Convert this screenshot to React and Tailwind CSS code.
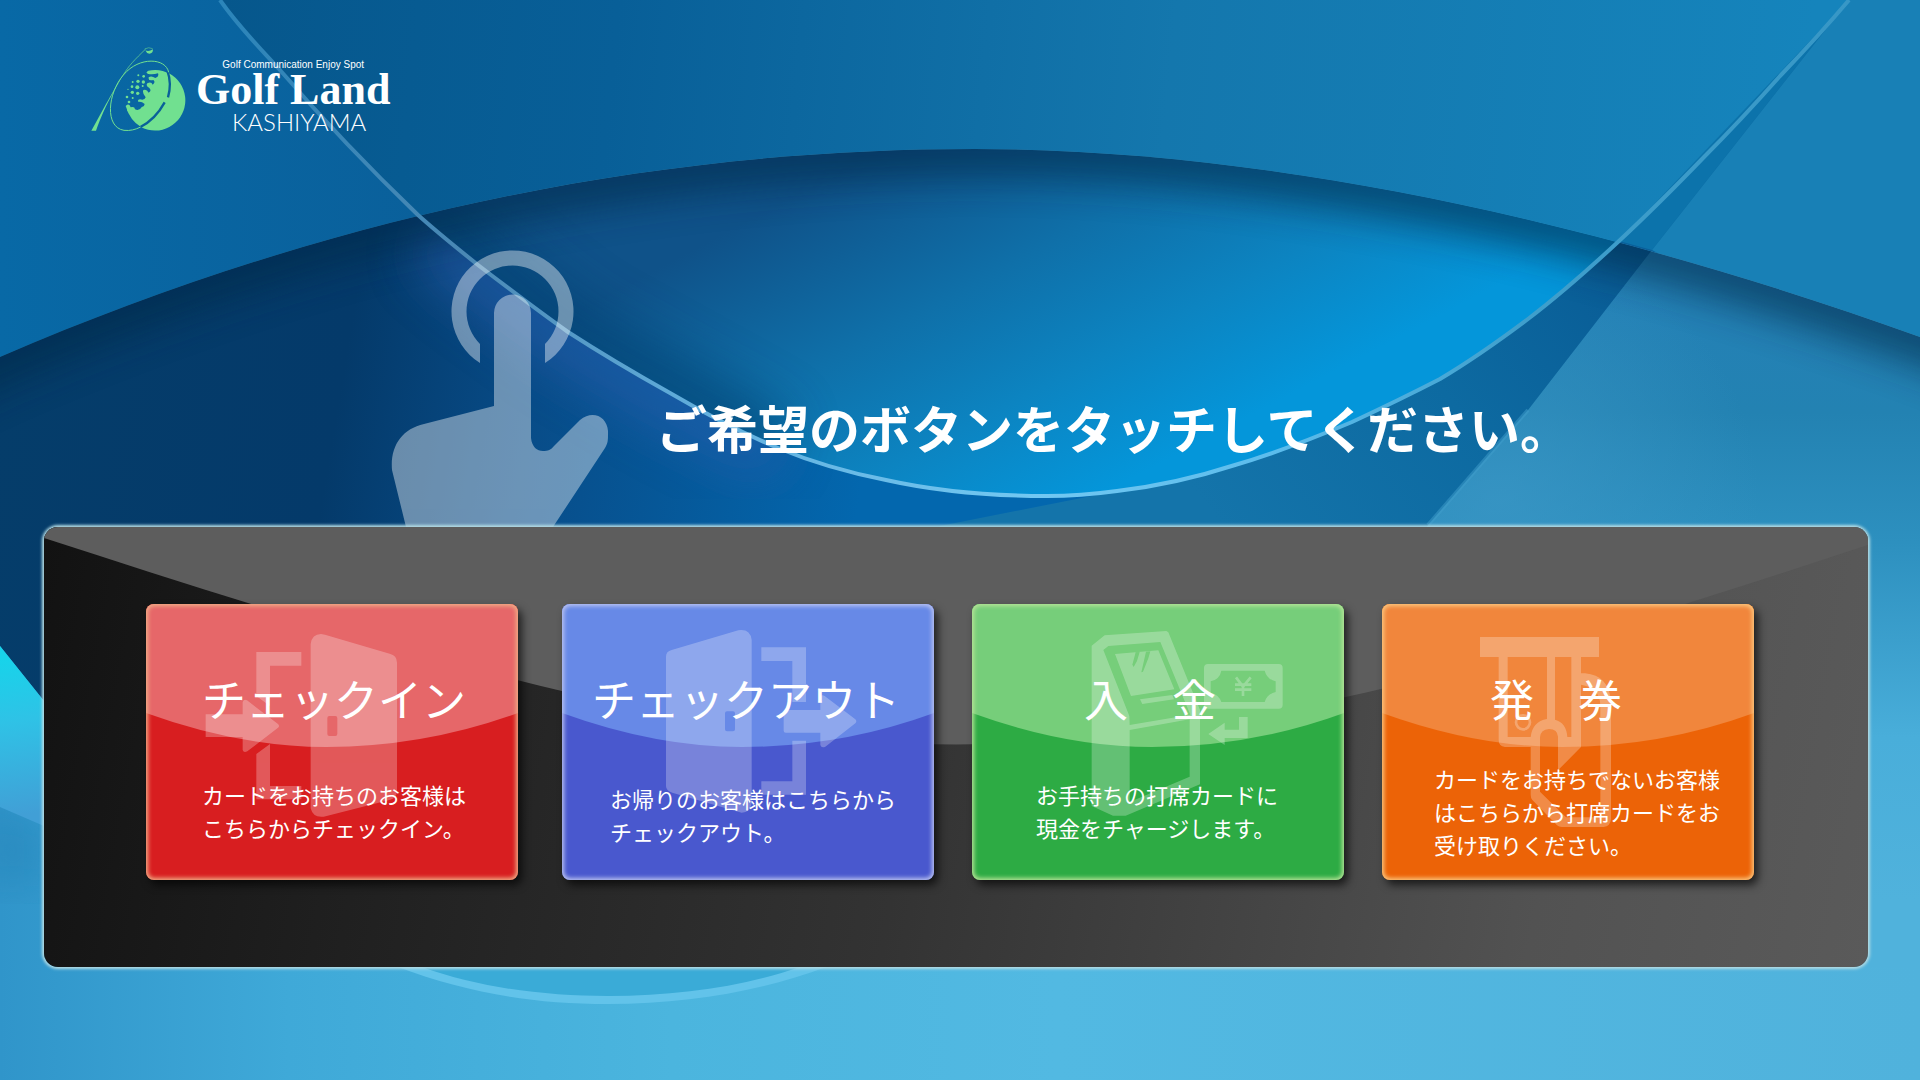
import React from "react";

const DOME =
  "M-100 404 L0 357 C330 215 650 149 975 149 C1270 149 1600 222 1920 337 L2020 375";
const SWOOP =
  "M220 0 C238 26 258 46 279 69 C325 122 370 169 418 215 C438 233 458 249 478 265 C508 288 538 311 568 332 C602 354 636 374 670 393 C706 414 742 433 778 448 C814 463 850 473 886 480 C940 492 992 496 1047 496 C1072 496 1095 494 1117 491 C1160 486 1198 477 1235 465 C1276 453 1314 438 1352 422 C1382 408 1411 394 1440 379 C1472 360 1500 340 1528 319 C1562 293 1590 268 1619 241 C1648 214 1676 186 1704 157 C1730 131 1756 103 1780 76 C1804 51 1827 26 1849 0";

function Backdrop() {
  return (
    <svg
      className="absolute inset-0 h-full w-full"
      viewBox="0 0 1920 1080"
      preserveAspectRatio="none"
      aria-hidden="true"
    >
      <defs>
        <linearGradient id="sky" x1="0" y1="0" x2="1" y2="0">
          <stop offset="0" stopColor="#0869a6" />
          <stop offset="0.22" stopColor="#0a609b" />
          <stop offset="1" stopColor="#0a609b" />
        </linearGradient>
        <linearGradient id="skyMid" gradientUnits="userSpaceOnUse" x1="220" y1="0" x2="1800" y2="160">
          <stop offset="0" stopColor="#06578c" />
          <stop offset="0.25" stopColor="#085f98" />
          <stop offset="0.6" stopColor="#1477ad" />
          <stop offset="1" stopColor="#1584bc" />
        </linearGradient>
        <linearGradient id="sea" x1="0" y1="0" x2="1" y2="0">
          <stop offset="0" stopColor="#3095ca" />
          <stop offset="0.15" stopColor="#3fa9d8" />
          <stop offset="0.35" stopColor="#4bb5de" />
          <stop offset="0.55" stopColor="#52b9e2" />
          <stop offset="1" stopColor="#50b2dc" />
        </linearGradient>
        <linearGradient id="navy" gradientUnits="userSpaceOnUse" x1="0" y1="380" x2="950" y2="540">
          <stop offset="0" stopColor="#053d6a" />
          <stop offset="0.35" stopColor="#043a6a" />
          <stop offset="0.55" stopColor="#084c88" />
          <stop offset="0.9" stopColor="#0367ae" />
          <stop offset="1" stopColor="#0367ae" />
        </linearGradient>
        <linearGradient id="bowl" gradientUnits="userSpaceOnUse" x1="920" y1="130" x2="1110" y2="490">
          <stop offset="0" stopColor="#0f5289" />
          <stop offset="0.4" stopColor="#0f70a9" />
          <stop offset="0.7" stopColor="#0c84c1" />
          <stop offset="1" stopColor="#0496da" />
        </linearGradient>
        <linearGradient id="blade" gradientUnits="userSpaceOnUse" x1="1650" y1="240" x2="1250" y2="560">
          <stop offset="0" stopColor="#085a94" />
          <stop offset="0.5" stopColor="#0d6aa1" />
          <stop offset="1" stopColor="#1474aa" />
        </linearGradient>
        <linearGradient id="east" gradientUnits="userSpaceOnUse" x1="0" y1="250" x2="0" y2="900">
          <stop offset="0" stopColor="#2480b7" />
          <stop offset="0.25" stopColor="#2382b2" />
          <stop offset="0.45" stopColor="#2d90bf" />
          <stop offset="0.75" stopColor="#49aeda" />
          <stop offset="1" stopColor="#50b2dc" />
        </linearGradient>
        <radialGradient id="eastGlow" gradientUnits="userSpaceOnUse" cx="1500" cy="500" r="260">
          <stop offset="0" stopColor="#3b97c6" stopOpacity="0.7" />
          <stop offset="1" stopColor="#3b97c6" stopOpacity="0" />
        </radialGradient>
        <linearGradient id="cyan" gradientUnits="userSpaceOnUse" x1="0" y1="660" x2="20" y2="815">
          <stop offset="0" stopColor="#18d3ea" />
          <stop offset="0.4" stopColor="#2fc2e6" />
          <stop offset="1" stopColor="#419fd6" />
        </linearGradient>
        <linearGradient id="swoopLine" x1="0" y1="0" x2="1" y2="0">
          <stop offset="0" stopColor="#2b85ba" />
          <stop offset="0.15" stopColor="#4a88b4" />
          <stop offset="0.3" stopColor="#62b0de" />
          <stop offset="0.5" stopColor="#72c8f2" />
          <stop offset="0.65" stopColor="#5bbcec" />
          <stop offset="0.8" stopColor="#3f9fcc" />
          <stop offset="1" stopColor="#3797c6" />
        </linearGradient>
        <filter id="soft" x="-20%" y="-20%" width="140%" height="140%">
          <feGaussianBlur stdDeviation="26" />
        </filter>
        <filter id="softer" x="-20%" y="-20%" width="140%" height="140%">
          <feGaussianBlur stdDeviation="18" />
        </filter>
        <clipPath id="domeClip">
          <path d={DOME + " V1080 H-100 Z"} />
        </clipPath>
        <clipPath id="bowlClip">
          <path d={SWOOP + " Z"} />
        </clipPath>
        <clipPath id="navyClip">
          <path d="M0 0 H220 L279 69 L418 215 L568 332 L778 448 L886 480 L1047 496 L1117 491 L940 526 L900 560 H60 V721 L0 646 Z" />
        </clipPath>
      </defs>

      <rect width="1920" height="1080" fill="url(#sky)" />
      <path d={SWOOP + " Z"} fill="url(#skyMid)" />
      <path d="M1849 0 L1619 241 L1652 250 Z" fill="#0c73ab" />
      <path d="M1849 0 L1652 250 L1920 400 V0 Z" fill="#1880b6" />

      <g clipPath="url(#domeClip)">
        <rect y="140" width="1920" height="940" fill="url(#sea)" />
        <path d="M1300 140 H1920 V967 H1300 Z" fill="url(#east)" />
        <path d="M1652 250 L1528 410 L1428 525 L1405 560 H1920 V337 Z" fill="url(#eastGlow)" />
        <path d="M1849 0 L1619 241 L1352 422 L1047 496 L886 480 L860 560 H1405 L1428 525 L1528 410 L1652 250 Z" fill="url(#blade)" />
        <path d="M1528 410 L1428 525" stroke="#3f9ecb" strokeWidth="4" fill="none" opacity="0.5" />
        <g clipPath="url(#navyClip)">
          <rect width="1200" height="740" fill="url(#navy)" />
          <path d="M430 235 L478 275 L568 340 L670 400 L778 455" stroke="#2a5fae" strokeWidth="56" fill="none" filter="url(#soft)" opacity="0.65" />
        </g>
        <g clipPath="url(#bowlClip)">
          <rect y="100" width="1920" height="420" fill="url(#bowl)" />
          <path d="M400 200 L568 332 L778 448" stroke="#06406f" strokeWidth="60" fill="none" filter="url(#soft)" opacity="0.7" />
        </g>
        <path d={DOME} stroke="#04294a" strokeWidth="56" fill="none" filter="url(#softer)" opacity="0.6" />
      </g>
      <path d="M-20 800 L44 826 V886 H-20 Z" fill="#2380b4" opacity="0.4" filter="url(#softer)" />
      <path d="M0 646 L44 701 V826 L0 807 Z" fill="url(#cyan)" />
      <path d={SWOOP} stroke="url(#swoopLine)" strokeWidth="4" fill="none" />

      <path d="M380 955 L398 967 C465 992 530 1004 608 1004 C690 1004 765 990 826 967 L840 955 Z" fill="#62c3ea" />
      <path d="M405 955 L422 967 C480 988 545 996 608 996 C680 996 745 986 800 967 L815 955 Z" fill="#3aabd7" />
    </svg>
  );
}

function LogoMark() {
  return (
    <svg className="h-[88px] w-[98px]" viewBox="30 45 294 264" aria-hidden="true">
      <path d="M197 57 C165 88 145 108 130 135" stroke="#71e090" strokeWidth="2" fill="none" />
      <path d="M133 128 C112 160 92 198 78 222 L34 302 H48 C62 262 80 222 96 194 Z" fill="#71e090" />
      <path d="M196 61 Q206 66 219 58 Q219 71 208 71 Q199 70 196 61 Z" fill="#71e090" />
      <path d="M194 57 Q206 50 218 56" stroke="#71e090" strokeWidth="1.5" fill="none" />
      <path
        d="M205 122 A91 91 0 1 1 184 292 Q150 272 137 228 Q148 218 152 232 Q164 228 165 238 Q178 244 186 230 Q192 232 194 222 Q184 214 176 216 Q170 210 180 208 Q194 212 197 202 Q186 190 190 180 Q200 176 206 188 Q216 182 208 174 Q196 168 202 160 Q214 154 218 164 Q228 156 220 150 Q204 154 206 142 Q214 136 226 144 Q238 140 234 130 Q220 134 205 132 Q194 128 205 122 Z"
        fill="#71e090"
      />
      <g fill="#71e090">
        <circle cx="191" cy="139" r="4" />
        <circle cx="175" cy="136" r="3" />
        <circle cx="174" cy="154" r="5" />
        <circle cx="190" cy="156" r="5" />
        <circle cx="158" cy="156" r="3" />
        <circle cx="156" cy="170" r="4" />
        <circle cx="172" cy="172" r="6" />
        <circle cx="188" cy="168" r="3" />
        <circle cx="144" cy="178" r="2" />
        <circle cx="157" cy="187" r="5" />
        <circle cx="173" cy="190" r="5" />
        <circle cx="141" cy="201" r="4" />
        <circle cx="158" cy="204" r="3" />
        <circle cx="147" cy="216" r="4" />
        <circle cx="147" cy="239" r="6" />
      </g>
      <path d="M262 122 Q276 160 264 202" stroke="#0a6099" strokeWidth="7" fill="none" />
      <path d="M254 217 Q226 268 180 292" stroke="#0a6099" strokeWidth="7" fill="none" />
      <path
        d="M266 127 C258 84 178 78 131 134 C82 190 74 292 132 301 C150 303 166 299 182 291"
        stroke="#71e090"
        strokeWidth="3"
        fill="none"
      />
    </svg>
  );
}

function TouchHand() {
  return (
    <svg className="h-[277px] w-[217px] shrink-0" viewBox="391 250 217 277" aria-hidden="true">
      <g fill="#ffffff" opacity="0.4">
        <path d="M480 363 A61 61 0 1 1 545 363 V344 A46 46 0 1 0 480 344 Z" />
        <path d="M494 406 V313 A18 18 0 0 1 531 313 V438 C532 447 537 451 543 451 C548 451 551 450 554 446 L580 420 C593 409 609 417 608 434 C608 440 608 443 605 448 L553 527 H406 L392 470 C390 446 402 429 424 424 Z" />
      </g>
    </svg>
  );
}

const DoorIn = (
  <>
    <path d="M378 186 H513 V227 H419 V348 L378 318 Z" />
    <path d="M378 492 L419 462 V588 H513 V628 H378 Z" />
    <path d="M226 373 H337 V337 Q339 326 350 331 L443 402 Q449 408 443 413 L351 484 Q340 490 337 480 V441 H226 Z" />
    <path
      fillRule="evenodd"
      d="M541 162 Q545 132 572 132 L584 134 L778 191 Q800 196 800 218 V600 Q800 625 780 629 L580 680 Q548 684 541 655 Z M597 378 Q591 378 591 384 V432 Q591 438 597 438 H615 Q621 438 621 432 V384 Q621 378 615 378 Z"
    />
  </>
);

const DoorOut = (
  <>
    <path d="M649 172 H783 V336 H742 V213 H649 Z" />
    <path d="M742 452 H783 V614 H649 V574 H742 Z" />
    <path d="M716 366 Q716 360 722 360 H826 V322 Q829 312 839 318 L931 388 Q937 394 931 400 L841 470 Q829 475 826 465 V428 H722 Q716 428 716 422 Z" />
    <path
      fillRule="evenodd"
      d="M363 200 Q363 184 380 180 L580 121 Q616 116 620 150 V640 Q616 668 590 668 L382 608 Q363 602 363 588 Z M546 364 Q540 364 540 370 V418 Q540 424 546 424 H564 Q570 424 570 418 V370 Q570 364 564 364 Z"
    />
  </>
);

const CashMachine = (
  <>
    <path
      fillRule="evenodd"
      d="M408 167 L447 136 L632 123 L638 127 L733 360 V583 L510 677 H472 L408 648 Z M443 180 L458 168 L614 156 L704 374 L522 405 L521 378 Z M522 420 L702 388 V560 L522 636 Z"
    />
    <path
      fillRule="evenodd"
      d="M478 192 L608 181 L656 298 L526 318 Z M540 187 L552 186 L544 213 L534 231 L530 224 Z M571 185 L584 184 L578 205 L562 245 L557 247 Z"
    />
    <path d="M553 328 L650 315 L655 328 L560 342 Z" />
    <path
      fillRule="evenodd"
      d="M757 222 H969 Q981 222 981 234 V344 Q981 356 969 356 H757 Q745 356 745 344 V234 Q745 222 757 222 Z M797 242 Q792 268 765 274 V308 Q790 314 797 336 H927 Q934 312 960 306 V274 Q934 268 927 242 Z"
    />
    <path d="M841 262 L862 290 L885 262 M862 288 V318 M838 284 H887 M838 299 H887" stroke="#fff" strokeWidth="8" fill="none" />
    <path d="M758 432 L807 398 V419 H850 V381 H876 V444 H807 V465 Z" />
  </>
);

const CardSlot = (
  <>
    <path d="M345 141 H702 V201 H648 V471 L579 541 V440 Q578 418 552 417 Q527 418 525 442 V605 L603 682 H698 Q706 682 706 674 V345 Q704 292 648 284 V250 H660 Q732 256 738 335 V688 Q736 709 716 711 H590 Q582 711 576 706 L502 630 Q497 624 497 614 V471 H420 Q401 469 401 450 V201 H345 Z M428 201 V441 H497 Q502 395 546 387 V201 Z M570 201 V389 Q604 398 607 441 H619 V201 Z" fillRule="evenodd" />
    <circle cx="474" cy="397" r="21" fill="none" stroke="#fff" strokeWidth="8" />
  </>
);

const MENU = [
  {
    title: "チェックイン",
    lines: ["カードをお持ちのお客様は", "こちらからチェックイン。"],
    base: "bg-[#d81e20]",
    rim: "shadow-[inset_0_0_4px_2px_#f0b088]",
    gloss: "#e66769",
    art: DoorIn,
    artBox: "47 42 1116 828",
    titlePad: "pl-1",
    textPad: "pt-4 pl-14",
  },
  {
    title: "チェックアウト",
    lines: ["お帰りのお客様はこちらから", "チェックアウト。"],
    base: "bg-[#4958ce]",
    rim: "shadow-[inset_0_0_4px_2px_#bcc4f0]",
    gloss: "#6789e7",
    art: DoorOut,
    artBox: "51 42 1116 828",
    titlePad: "pr-1",
    textPad: "pt-6 pl-12",
  },
  {
    title: "入　金",
    lines: ["お手持ちの打席カードに", "現金をチャージします。"],
    base: "bg-[#2dab44]",
    rim: "shadow-[inset_0_0_4px_2px_#b8e498]",
    gloss: "#76ce7a",
    art: CashMachine,
    artBox: "49 42 1116 828",
    titlePad: "pr-4",
    textPad: "pt-4 pl-16",
  },
  {
    title: "発　券",
    lines: ["カードをお持ちでないお客様", "はこちらから打席カードをお", "受け取りください。"],
    base: "bg-[#ec6307]",
    rim: "shadow-[inset_0_0_4px_2px_#fbc880]",
    gloss: "#f1863c",
    art: CardSlot,
    artBox: "51 42 1116 828",
    titlePad: "pr-6",
    textPad: "pt-4 pl-13",
  },
];

function MenuButton({ item }) {
  return (
    <button
      type="button"
      className={
        "relative flex h-[276px] w-full max-w-[372px] flex-col rounded-lg text-white shadow-[4px_5px_8px_rgba(0,0,0,0.65)] " +
        item.base
      }
    >
      <svg
        className="absolute inset-0 h-full w-full rounded-lg"
        viewBox="0 0 372 276"
        preserveAspectRatio="none"
        aria-hidden="true"
      >
        <path d="M0 0 H372 V109 Q279 143 180 143 Q94 143 0 109 Z" fill={item.gloss} />
      </svg>
      <svg className="absolute inset-0 h-full w-full" viewBox={item.artBox} aria-hidden="true">
        <g fill="#ffffff" opacity="0.26">
          {item.art}
        </g>
      </svg>
      <span className={"absolute inset-0 rounded-lg " + item.rim} aria-hidden="true" />
      <span className={"relative w-full pt-[66px] text-center text-[44px] leading-[56px] " + item.titlePad}>
        {item.title}
      </span>
      <span
        className={
          "relative flex w-full grow flex-col justify-center text-left text-[22px] leading-[33px] whitespace-nowrap " +
          item.textPad
        }
      >
        {item.lines.map((line) => (
          <span key={line}>{line}</span>
        ))}
      </span>
    </button>
  );
}

export default function App() {
  return (
    <div className="relative min-h-screen overflow-hidden bg-[#0a609b] font-['Noto_Sans_CJK_JP','Noto_Sans',sans-serif] text-white">
      <Backdrop />
      <div className="relative flex flex-col pr-13 pl-11">
        <header className="flex gap-2 pt-[45px] pl-[46px]">
          <LogoMark />
          <div className="flex flex-col items-center pt-[14px] whitespace-nowrap">
            <span className="font-['Liberation_Sans',sans-serif] text-[10px] leading-3">
              Golf Communication Enjoy Spot
            </span>
            <span className="font-['Liberation_Serif',serif] text-[44px] leading-[38px] font-bold">Golf Land</span>
            <span className="pl-3 font-[Lato,sans-serif] text-[24px] leading-[26px] font-light">KASHIYAMA</span>
          </div>
        </header>

        <div className="mt-[115px] flex items-end gap-12 pl-[347px]">
          <TouchHand />
          <h1 className="pb-[70px] text-[51px] leading-[60px] font-bold whitespace-nowrap">
            ご希望のボタンをタッチしてください。
          </h1>
        </div>

        <main className="relative overflow-hidden rounded-[14px] bg-linear-[100deg,#121212_0%,#1f1f1f_18%,#333333_48%,#525252_82%,#5a5a5a_100%] shadow-[0_0_3px_2px_#b4dce4]">
          <svg
            className="absolute inset-0 h-full w-full"
            viewBox="0 0 1824 441"
            preserveAspectRatio="none"
            aria-hidden="true"
          >
            <path d="M0 0 H1824 V18 C1500 125 1200 218 912 218 C640 218 330 118 0 11 Z" fill="#5d5d5d" />
          </svg>
          <nav
            aria-label="メニュー"
            className="relative grid grid-cols-[416fr_410fr_410fr_372fr] pt-[77px] pr-[114px] pb-[87px] pl-[102px]"
          >
            {MENU.map((item) => (
              <MenuButton key={item.title} item={item} />
            ))}
          </nav>
        </main>
      </div>
    </div>
  );
}
